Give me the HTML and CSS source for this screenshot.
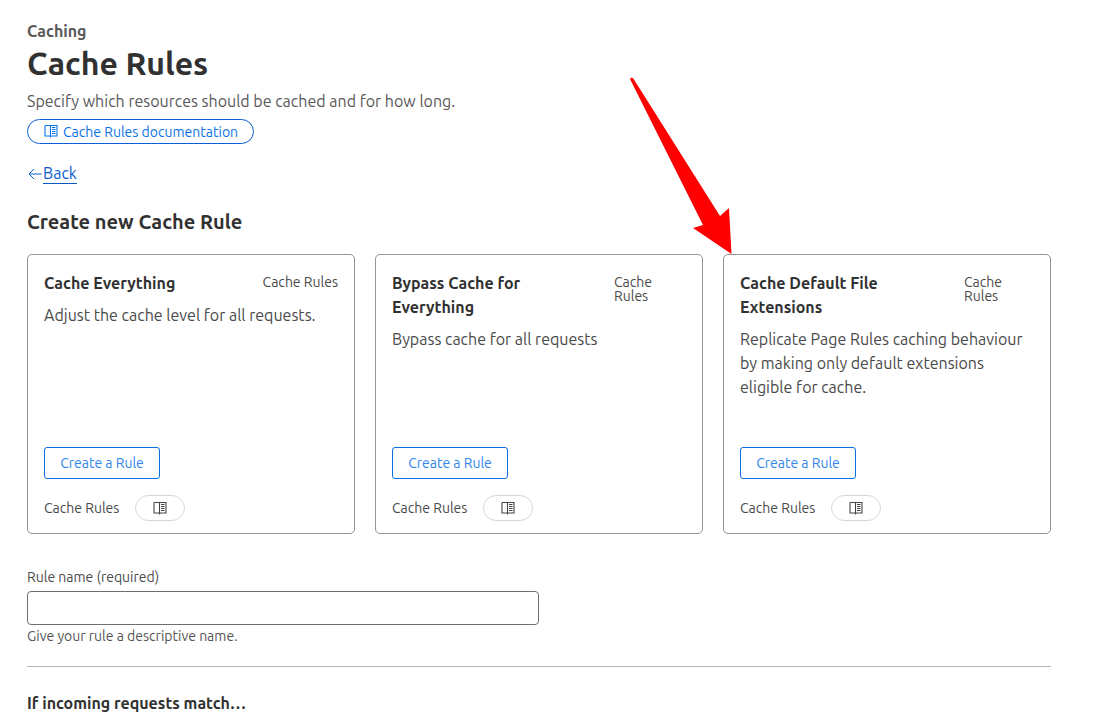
FILE: index.html
```html
<!DOCTYPE html>
<html lang="en">
<head>
<meta charset="utf-8">
<title>Cache Rules</title>
<link rel="stylesheet" href="styles.css">
</head>
<body>
<svg width="0" height="0" class="defs"><defs>
<symbol id="book" viewBox="0 0 14 13"><path d="M1 .5H6.500V12.500M6.500 .5H13V11H6.500M1 .5V11H6.500" fill="none" stroke="currentColor" stroke-width="1.100"/><path d="M8 2.500h3.500M8 4.500h3.500M8 6.500h3.500M8 8.500h3.500" fill="none" stroke="currentColor" stroke-width="1"/></symbol>
</defs></svg>
<main class="page">
  <header class="head">
    <div class="eyebrow">Caching</div>
    <h1 class="title">Cache Rules</h1>
    <p class="lead">Specify which resources should be cached and for how long.</p>
    <a class="doc-pill"><svg class="doc-icon"><use href="#book"/></svg>Cache Rules documentation</a>
  </header>
  <div class="back"><svg class="back-arrow" viewBox="0 0 14 12"><path d="M13.500 6H1M6 1 1 6l5 5" fill="none" stroke="currentColor" stroke-width="1"/></svg><a class="back-link">Back</a></div>
  <h2 class="section">Create new Cache Rule</h2>
  <div class="cards">
    <article class="card">
      <div class="card-top"><h3 class="card-title">Cache Everything</h3><span class="tag tag-wide">Cache Rules</span></div>
      <p class="card-text">Adjust the cache level for all requests.</p>
      <div class="card-foot">
        <a class="btn">Create a Rule</a>
        <div class="foot-row"><span class="foot-label">Cache Rules</span><a class="mini-pill"><svg class="mini-icon"><use href="#book"/></svg></a></div>
      </div>
    </article>
    <article class="card">
      <div class="card-top"><h3 class="card-title">Bypass Cache for Everything</h3><span class="tag tag-mid">Cache Rules</span></div>
      <p class="card-text">Bypass cache for all requests</p>
      <div class="card-foot">
        <a class="btn">Create a Rule</a>
        <div class="foot-row"><span class="foot-label">Cache Rules</span><a class="mini-pill"><svg class="mini-icon"><use href="#book"/></svg></a></div>
      </div>
    </article>
    <article class="card">
      <div class="card-top"><h3 class="card-title">Cache Default File Extensions</h3><span class="tag tag-narrow">Cache Rules</span></div>
      <p class="card-text">Replicate Page Rules caching behaviour by making only default extensions eligible for cache.</p>
      <div class="card-foot">
        <a class="btn">Create a Rule</a>
        <div class="foot-row"><span class="foot-label">Cache Rules</span><a class="mini-pill"><svg class="mini-icon"><use href="#book"/></svg></a></div>
      </div>
    </article>
  </div>
  <div class="field">
    <label class="field-label" for="rule">Rule name (required)</label>
    <input class="field-input" id="rule" type="text">
    <div class="field-help">Give your rule a descriptive name.</div>
  </div>
  <hr class="rule">
  <h3 class="match">If incoming requests match…</h3>
</main>
<svg class="annot" viewBox="0 0 1096 725" width="1096" height="725"><path d="M630 79q1-2 3-1L720 216l9-8 2.500 46-38.500-26 10-3z" fill="#fe0000"/></svg>
</body>
</html>
```
FILE: styles.css
```css
html, body { margin: 0; padding: 0; background: #fff; }
body { font-family: Ubuntu, "Noto Sans", sans-serif; color: #313131; height: 725px; overflow: hidden; position: relative; }
.defs { position: absolute; }
.page { width: 1024px; padding: 20px 0 0 27px; }
.head { display: flex; flex-direction: column; align-items: flex-start; }
.eyebrow { font-size: 16px; line-height: 22px; font-weight: 700; color: #595959; }
.title { margin: 0; font-size: 32px; line-height: 42px; font-weight: 700; color: #313131; }
.lead { margin: 5px 0 0; font-size: 16px; line-height: 24px; color: #595959; }
.doc-pill { box-sizing: border-box; width: 227px; height: 25px; margin-top: 6px; padding-left: 16px; display: flex; align-items: center; gap: 5px; border: 1px solid #0a5fd6; border-radius: 13px; font-size: 14px; color: #0b72e7; }
.doc-icon { width: 14px; height: 13px; }
.back { display: flex; align-items: center; height: 24px; margin-top: 17px; color: #0a5ccb; }
.back-arrow { width: 14px; height: 12px; margin: 1px 1px 0 1px; }
.back-link { font-size: 16px; line-height: 20px; border-bottom: 1px solid #0a5ccb; }
.section { margin: 24px 0 0; font-size: 20px; line-height: 26px; font-weight: 700; color: #313131; }
.cards { display: grid; grid-template-columns: repeat(3, 328px); gap: 20px; margin-top: 19px; }
.card { box-sizing: border-box; height: 280px; padding: 16px; border: 1px solid #949494; border-radius: 5px; display: flex; flex-direction: column; }
.card-top { display: flex; justify-content: space-between; align-items: flex-start; gap: 24px; }
.card-title { margin: 0; flex: 1; font-size: 16px; line-height: 24px; font-weight: 700; color: #313131; }
.tag { margin-top: 4px; flex: none; font-size: 14px; line-height: 14px; color: #4a4a4a; }
.tag-mid { width: 72px; }
.tag-narrow { width: 70px; }
.card-text { margin: 8px 0 0; font-size: 16px; line-height: 24px; color: #4a4a4a; }
.card-foot { margin-top: auto; display: flex; flex-direction: column; align-items: flex-start; gap: 16px; margin-bottom: -4px; }
.btn { box-sizing: border-box; width: 116px; height: 32px; display: flex; align-items: center; justify-content: center; border: 1px solid #0a6fe6; border-radius: 3px; font-size: 14px; color: #2f86ec; }
.foot-row { display: flex; align-items: center; gap: 16px; }
.foot-label { font-size: 14px; color: #4a4a4a; }
.mini-pill { box-sizing: border-box; width: 50px; height: 26px; display: flex; align-items: center; justify-content: center; border: 1px solid #d6d6d6; border-radius: 13px; color: #444; }
.mini-icon { width: 14px; height: 13px; }
.field { margin-top: 33px; }
.field-label { display: block; font-size: 14px; line-height: 20px; color: #4a4a4a; }
.field-input { display: block; box-sizing: border-box; width: 512px; height: 34px; margin: 4px 0 0; padding: 0 8px; border: 1px solid #6e6e6e; border-radius: 4px; background: #fff; }
.field-help { margin-top: 2px; font-size: 14px; line-height: 18px; color: #555; }
.rule { margin: 21px 0 0; border: 0; border-top: 1px solid #b3b3b3; }
.match { margin: 25px 0 0; font-size: 16px; line-height: 22px; font-weight: 700; color: #313131; }
.annot { position: absolute; left: 0; top: 0; pointer-events: none; }
```
